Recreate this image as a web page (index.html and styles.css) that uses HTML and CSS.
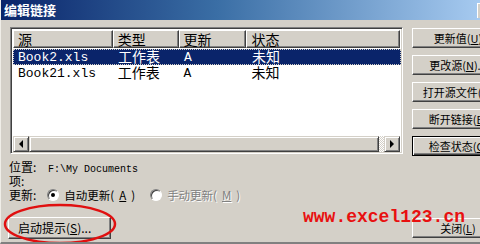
FILE: index.html
```html
<!DOCTYPE html>
<html lang="zh-CN">
<head>
  <meta charset="UTF-8">
  <title>编辑链接</title>
  <link rel="stylesheet" href="styles.css">
</head>
<body>
  <div class="dialog">
    <div class="titlebar">
      <span class="title">编辑链接</span>
      <span class="help-btn"></span>
    </div>

    <div class="content">
      <div class="top">
        <div class="listbox">
          <div class="list-head">
            <div class="col c1">源</div>
            <div class="col c2">类型</div>
            <div class="col c3">更新</div>
            <div class="col c4">状态</div>
          </div>
          <div class="list-body">
            <div class="row selected">
              <div class="cell c1 mono">Book2.xls</div>
              <div class="cell c2">工作表</div>
              <div class="cell c3 mono">A</div>
              <div class="cell c4">未知</div>
            </div>
            <div class="row">
              <div class="cell c1 mono">Book21.xls</div>
              <div class="cell c2">工作表</div>
              <div class="cell c3 mono">A</div>
              <div class="cell c4">未知</div>
            </div>
          </div>
          <div class="hscroll">
            <div class="sb-btn"><span class="arrow left"></span></div>
            <div class="sb-thumb"></div>
            <div class="sb-track"></div>
            <div class="sb-btn"><span class="arrow right"></span></div>
          </div>
        </div>

        <div class="side-buttons">
          <div class="btn"><span class="btn-text">更新值(<u>U</u>)</span></div>
          <div class="btn"><span class="btn-text">更改源(<u>N</u>)...</span></div>
          <div class="btn"><span class="btn-text">打开源文件(<u>O</u>)</span></div>
          <div class="btn"><span class="btn-text">断开链接(<u>B</u>)</span></div>
          <div class="btn default"><span class="btn-text">检查状态(<u>C</u>)</span></div>
        </div>
      </div>

      <div class="info">
        <div class="line">位置: <span class="path">F:\My Documents</span></div>
        <div class="line">项:</div>
        <div class="line radios">
          <span>更新:</span>
          <label class="radio"><span class="dot on"></span>自动更新(<u>A</u>)</label>
          <label class="radio disabled"><span class="dot"></span>手动更新(<u>M</u>)</label>
        </div>
      </div>

      <div class="bottom">
        <div class="btn startup"><span class="btn-text">启动提示(<u>S</u>)...</span></div>
        <div class="btn close"><span class="btn-text">关闭(<u>L</u>)</span></div>
      </div>
    </div>

    <div class="watermark">www.excel123.cn</div>
    <svg class="circle" width="120" height="44" viewBox="0 0 120 44">
      <ellipse cx="59" cy="22" rx="55" ry="19" fill="none" stroke="#e01010" stroke-width="2.5"/>
    </svg>
  </div>
</body>
</html>
```

FILE: styles.css
```css
body {
  margin: 0;
  width: 480px;
  height: 244px;
  overflow: hidden;
  font-family: "Noto Sans CJK SC", "DejaVu Sans", sans-serif;
  font-size: 12px;
}

.dialog {
  position: relative;
  width: 480px;
  height: 244px;
  background: #d4d0c8;
  border-left: 1px solid #f0eee8;
  border-bottom: 2px solid #808080;
  box-sizing: border-box;
  overflow: hidden;
}

.titlebar {
  height: 20px;
  background: linear-gradient(to right, #0a246a 0%, #3a6ea5 45%, #a6caf0 100%);
  display: flex;
  align-items: center;
  justify-content: space-between;
  padding-left: 3px;
}

.title {
  color: #fff;
  font-weight: bold;
  font-size: 13px;
  line-height: 20px;
}

.help-btn {
  width: 16px;
  height: 14px;
  background: #d4d0c8;
  border-top: 1px solid #fff;
  border-left: 1px solid #fff;
  margin-right: -14px;
}

.content {
  padding: 7px 0 0 9px;
}

.top {
  display: flex;
  gap: 9px;
}

.listbox {
  width: 393px;
  height: 127px;
  flex: none;
  box-sizing: border-box;
  border-top: 1px solid #808080;
  border-left: 1px solid #808080;
  border-right: 1px solid #fff;
  border-bottom: 1px solid #fff;
  box-shadow: inset 1px 1px 0 #404040, inset -1px -1px 0 #d4d0c8;
  background: #fff;
  padding: 2px;
  display: flex;
  flex-direction: column;
}

.list-head {
  display: flex;
  height: 18px;
}

.col {
  background: #d4d0c8;
  box-sizing: border-box;
  border-top: 1px solid #fff;
  border-left: 1px solid #fff;
  border-right: 1px solid #404040;
  border-bottom: 1px solid #404040;
  box-shadow: inset -1px -1px 0 #808080;
  font-size: 14px;
  line-height: 1;
  display: flex;
  align-items: center;
  padding-left: 4px;
  padding-bottom: 1px;
  color: #000;
}

.c1 { width: 100px; }
.c2 { width: 66px; }
.c3 { width: 68px; }
.c4 { width: 154px; }

.list-body {
  flex: 1;
  padding-top: 1px;
}

.row {
  display: flex;
  height: 16px;
}

.row.selected {
  background: #0a246a;
  color: #fff;
  outline: 1px dotted #d4d0c8;
  outline-offset: -1px;
  width: 388px;
}

.cell {
  font-size: 14px;
  line-height: 1;
  height: 16px;
  display: flex;
  align-items: center;
  padding-left: 5px;
  padding-bottom: 2px;
  box-sizing: border-box;
  white-space: nowrap;
}

.mono {
  font-family: "Liberation Mono", "DejaVu Sans Mono", monospace;
  font-size: 13px;
  padding-bottom: 0;
}

.hscroll {
  display: flex;
  height: 16px;
  margin-bottom: -1px;
}

.sb-btn,
.sb-thumb {
  background: #d4d0c8;
  box-sizing: border-box;
  border-top: 1px solid #d4d0c8;
  border-left: 1px solid #d4d0c8;
  border-right: 1px solid #404040;
  border-bottom: 1px solid #404040;
  box-shadow: inset 1px 1px 0 #fff, inset -1px -1px 0 #808080;
}

.sb-btn {
  width: 16px;
  display: flex;
  align-items: center;
  justify-content: center;
}

.sb-thumb {
  flex: 1;
}

.sb-track {
  width: 5px;
  background-color: #ece9e2;
  background-image: repeating-conic-gradient(#d4d0c8 0 25%, #fff 0 50%);
  background-size: 2px 2px;
}

.arrow {
  width: 0;
  height: 0;
  border-top: 4px solid transparent;
  border-bottom: 4px solid transparent;
}

.arrow.left { border-right: 4px solid #000; }
.arrow.right { border-left: 4px solid #000; }

.side-buttons {
  flex: none;
  display: flex;
  flex-direction: column;
  gap: 7px;
  margin-top: 1px;
}

.btn {
  width: 92px;
  flex-shrink: 0;
  height: 20px;
  box-sizing: border-box;
  background: #d4d0c8;
  border-top: 1px solid #fff;
  border-left: 1px solid #fff;
  border-right: 1px solid #404040;
  border-bottom: 1px solid #404040;
  box-shadow: inset -1px -1px 0 #808080;
  display: flex;
  align-items: center;
  justify-content: center;
  color: #000;
  font-size: 11px;
}

.btn.default {
  border: 1px solid #000;
  box-shadow: inset 1px 1px 0 #fff, inset -1px -1px 0 #404040, inset -2px -2px 0 #808080;
}

.btn-text {
  white-space: nowrap;
  line-height: 14px;
}

.info {
  padding-top: 4px;
  margin-left: -1px;
}

.line {
  height: 14px;
  line-height: 14px;
}

.path {
  font-family: "Liberation Mono", "DejaVu Sans Mono", monospace;
  font-size: 10px;
  margin-left: 9px;
}

.radios {
  display: flex;
  align-items: center;
  height: 16px;
  margin-top: -1px;
}

.radio {
  display: flex;
  align-items: center;
  gap: 5px;
  margin-left: 11px;
  font-size: 11.5px;
}

.radio + .radio {
  margin-left: 15px;
}

.radio.disabled {
  color: #808080;
  text-shadow: 1px 1px 0 #fff;
}

.dot {
  width: 12px;
  height: 12px;
  box-sizing: border-box;
  border-radius: 50%;
  background: #fff;
  border: 1px solid;
  border-color: #808080 #fff #fff #808080;
  box-shadow: inset 1px 1px 0 #404040;
  position: relative;
}

.dot.on::after {
  content: "";
  position: absolute;
  left: 3px;
  top: 3px;
  width: 4px;
  height: 4px;
  border-radius: 50%;
  background: #000;
}

.bottom {
  display: flex;
  align-items: flex-start;
  gap: 301px;
  margin-top: 14px;
  margin-left: -2px;
}

.btn.startup {
  width: 103px;
  height: 22px;
  justify-content: flex-start;
  padding-left: 9px;
  font-size: 12px;
}

.btn.close {
  height: 20px;
  margin-top: 1px;
}

.watermark {
  position: absolute;
  left: 302px;
  top: 207px;
  font-family: "Liberation Mono", "DejaVu Sans Mono", monospace;
  font-weight: bold;
  font-size: 18px;
  color: #e81010;
  line-height: 20px;
}

.circle {
  position: absolute;
  left: 0;
  top: 202px;
}
```
